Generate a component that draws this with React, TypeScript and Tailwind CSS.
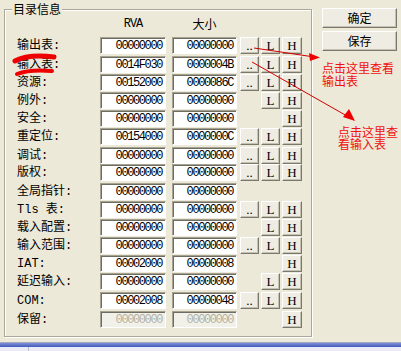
import React from 'react';

type Row = { label: string; rva: string; size: string; d: boolean; l: boolean; h: boolean; hc: string; latin?: boolean; disabled?: boolean };

const rows: Row[] = [
  { label: '输出表:', rva: '00000000', size: '00000000', d: true, l: true, h: true, hc: 'h-[19px]' },
  { label: '输入表:', rva: '0014F030', size: '0000004B', d: true, l: true, h: true, hc: 'h-[18px]' },
  { label: '资源:', rva: '00152000', size: '0000086C', d: true, l: true, h: true, hc: 'h-[18px]' },
  { label: '例外:', rva: '00000000', size: '00000000', d: false, l: true, h: true, hc: 'h-[18px]' },
  { label: '安全:', rva: '00000000', size: '00000000', d: false, l: false, h: true, hc: 'h-[18px]' },
  { label: '重定位:', rva: '00154000', size: '0000000C', d: true, l: true, h: true, hc: 'h-[19px]' },
  { label: '调试:', rva: '00000000', size: '00000000', d: true, l: true, h: true, hc: 'h-[17px]' },
  { label: '版权:', rva: '00000000', size: '00000000', d: true, l: true, h: true, hc: 'h-[19px]' },
  { label: '全局指针:', rva: '00000000', size: '00000000', d: false, l: false, h: false, hc: 'h-[18px]' },
  { label: 'Tls 表:', rva: '00000000', size: '00000000', d: true, l: true, h: true, hc: 'h-[18px]' },
  { label: '载入配置:', rva: '00000000', size: '00000000', d: false, l: true, h: true, hc: 'h-[18px]' },
  { label: '输入范围:', rva: '00000000', size: '00000000', d: true, l: true, h: true, hc: 'h-[18px]' },
  { label: 'IAT:', rva: '00002000', size: '00000008', d: false, l: false, h: true, hc: 'h-[18px]' },
  { label: '延迟输入:', rva: '00000000', size: '00000000', d: false, l: true, h: true, hc: 'h-[19px]' },
  { label: 'COM:', rva: '00002008', size: '00000048', d: true, l: true, h: true, hc: 'h-[19px]' },
  { label: '保留:', rva: '00000000', size: '00000000', d: false, l: false, h: true, hc: 'h-[17px]', disabled: true },
];

const labelFont = "[font-family:'Liberation_Mono','Noto_Sans_CJK_SC',monospace]";

function Field({ value, w, disabled }: { value: string; w: string; disabled?: boolean }) {
  return (
    <div
      className={`${w} h-[17px] flex items-center justify-end pr-[3px] border-t border-l border-r border-b border-t-[#a5a291] border-l-[#a5a291] border-r-white border-b-white shadow-[inset_1px_1px_0_#6f6d62] text-[12px] leading-none tracking-[-1.4px] [font-family:'Liberation_Mono',monospace] ${
        disabled ? 'bg-[#f2f1e9] text-[#b3b1a4]' : 'bg-white text-black'
      }`}
    >
      {value}
    </div>
  );
}

function SmallBtn({ text, w, show }: { text: string; w: string; show: boolean }) {
  if (!show) return <div className={`${w} h-[17px]`} />;
  return (
    <div
      className={`${w} h-[17px] flex items-center justify-center bg-[#efede3] border-t border-l border-r border-b border-t-white border-l-white border-r-[#7a786c] border-b-[#7a786c] shadow-[inset_-1px_-1px_0_#c5c2b2] text-[13px] leading-none text-black [font-family:'Liberation_Serif',serif]`}
    >
      {text}
    </div>
  );
}

function BigBtn({ text }: { text: string }) {
  return (
    <div className="w-[75px] h-[20px] flex items-center justify-center bg-[#efede3] border-t border-l border-r border-b border-t-white border-l-white border-r-[#7a786c] border-b-[#7a786c] shadow-[inset_-1px_-1px_0_#c5c2b2] text-[12px] leading-none text-black [font-family:'Noto_Sans_CJK_SC',sans-serif]">
      {text}
    </div>
  );
}

export default function App() {
  return (
    <div className="relative w-[401px] h-[351px] bg-[#ece9d8] overflow-hidden flex flex-col">
      <div className="h-[342px] flex items-start pl-[4px] pt-[8px]">
        {/* Group box */}
        <div className="relative mt-[1px] w-[308px] h-[328px] border border-[#aca899] shadow-[inset_1px_1px_0_#fff,1px_1px_0_#fff] pl-[12px] pt-[7px]">
          <div className="absolute left-[7px] -top-[8px] px-[1px] bg-[#ece9d8] text-[12px] leading-[14px] text-black [font-family:'Noto_Sans_CJK_SC',sans-serif]">
            目录信息
          </div>
          <div className="flex h-[13px] items-center text-[12px] leading-none text-black">
            <div className="w-[83px]" />
            <div className={`w-[66px] text-center tracking-[-1px] [font-family:'Liberation_Mono',monospace]`}>RVA</div>
            <div className="w-[6px]" />
            <div className="w-[65px] text-center [font-family:'Noto_Sans_CJK_SC',sans-serif]">大小</div>
          </div>
          <div className="mt-[7px] flex flex-col">
            {rows.map((r, i) => (
              <div key={i} className={`${r.hc} flex items-start`}>
                <div className={`w-[83px] h-[17px] flex items-center text-[12px] leading-none text-black ${labelFont}`}>
                  {r.label}
                </div>
                <Field value={r.rva} w="w-[66px]" disabled={r.disabled} />
                <div className="w-[6px]" />
                <Field value={r.size} w="w-[65px]" disabled={r.disabled} />
                <div className="w-[3px]" />
                <SmallBtn text=".." w="w-[19px]" show={r.d} />
                <div className="w-[2px]" />
                <SmallBtn text="L" w="w-[19px]" show={r.l} />
                <div className="w-[2px]" />
                <SmallBtn text="H" w="w-[20px]" show={r.h} />
              </div>
            ))}
          </div>
        </div>
        {/* Right buttons */}
        <div className="ml-[10px] flex flex-col gap-[3px]">
          <BigBtn text="确定" />
          <BigBtn text="保存" />
        </div>
      </div>
      {/* bottom strip */}
      <div className="h-[1px] bg-[#a3a6c0]" />
      <div className="h-[4px] bg-gradient-to-b from-[#7f90da] to-[#4358bb]" />
      <div className="flex-1 bg-[#e9ecf6] flex">
        <div className="ml-[28px] w-[1px] bg-[#b9bccb]" />
      </div>

      {/* Annotations */}
      <svg className="absolute left-0 top-0 pointer-events-none" width="401" height="351" viewBox="0 0 401 351">
        <path d="M15 61 Q 28 54 54 57" stroke="#ee0000" strokeWidth="5" fill="none" strokeLinecap="round" />
        <path d="M17 74 Q 30 69 52 71" stroke="#ee0000" strokeWidth="4" fill="none" strokeLinecap="round" />
        <line x1="254" y1="48" x2="311" y2="56.5" stroke="#d00000" strokeWidth="1" />
        <polygon points="320,57.5 309,53 310,61" fill="#ee0000" />
        <line x1="252" y1="62" x2="347" y2="116" stroke="#d00000" strokeWidth="1" />
        <polygon points="355,121 343,117 349,109" fill="#ee0000" />
      </svg>
      <div className="absolute left-[322px] top-[61px] text-[12px] leading-[13px] text-[#f01010] [font-family:'Noto_Sans_CJK_SC',sans-serif]">
        点击这里查看
        <br />
        输出表
      </div>
      <div className="absolute left-[338px] top-[126px] text-[12px] leading-[12px] text-[#f01010] [font-family:'Noto_Sans_CJK_SC',sans-serif]">
        点击这里查
        <br />
        看输入表
      </div>
    </div>
  );
}
